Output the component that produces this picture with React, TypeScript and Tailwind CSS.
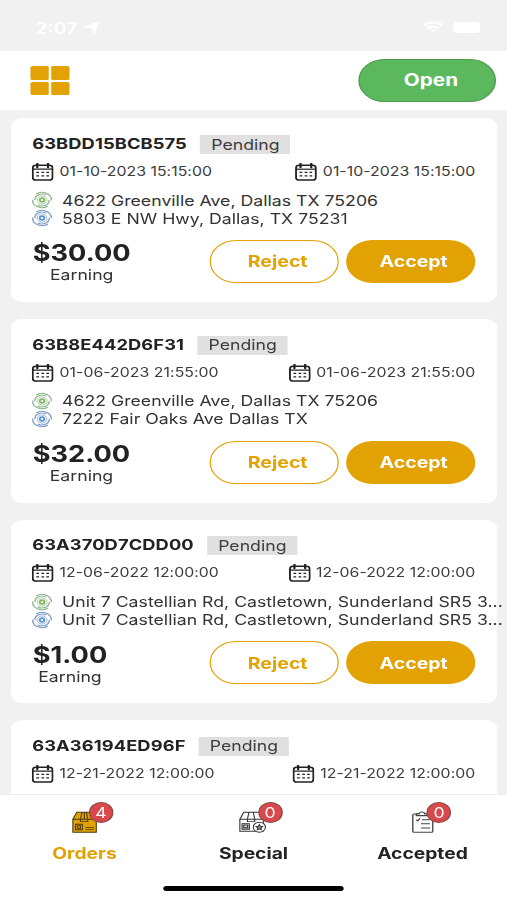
import clsx from "clsx";

type Order = {
  id: string;
  pickup: string;
  dropoff: string;
  from: string;
  to: string;
  earning: string;
};

const ORDERS: Order[] = [
  {
    id: "63BDD15BCB575",
    pickup: "01-10-2023 15:15:00",
    dropoff: "01-10-2023 15:15:00",
    from: "4622 Greenville Ave, Dallas TX 75206",
    to: "5803 E NW Hwy, Dallas, TX 75231",
    earning: "$30.00",
  },
  {
    id: "63B8E442D6F31",
    pickup: "01-06-2023 21:55:00",
    dropoff: "01-06-2023 21:55:00",
    from: "4622 Greenville Ave, Dallas TX 75206",
    to: "7222 Fair Oaks Ave Dallas TX",
    earning: "$32.00",
  },
  {
    id: "63A370D7CDD00",
    pickup: "12-06-2022 12:00:00",
    dropoff: "12-06-2022 12:00:00",
    from: "Unit 7 Castellian Rd, Castletown, Sunderland SR5 3...",
    to: "Unit 7 Castellian Rd, Castletown, Sunderland SR5 3...",
    earning: "$1.00",
  },
];

// Only the top of this card shows above the tab bar
const NEXT_ORDER = {
  id: "63A36194ED96F",
  pickup: "12-21-2022 12:00:00",
  dropoff: "12-21-2022 12:00:00",
};

const TABS = [
  { label: "Orders", count: 4, active: true, Icon: BoxIcon },
  { label: "Special", count: 0, active: false, Icon: SpecialBoxIcon },
  { label: "Accepted", count: 0, active: false, Icon: ClipboardIcon },
];

function CalendarIcon() {
  return (
    <svg viewBox="0 0 18 18" className="h-[18px] w-[18px] shrink-0" fill="none" stroke="#222">
      <rect x="0.9" y="2.2" width="16.2" height="14.9" rx="2.6" strokeWidth="1.5" />
      <path d="M1 6.2h16" strokeWidth="1.2" />
      <path d="M4.6 0.8v3.4M13.4 0.8v3.4" strokeWidth="1.9" strokeLinecap="round" />
      <path d="M3.8 9.4h2.2M8 9.4h2.2M12 9.4h2.2M3.8 12.9h2.2M8 12.9h2.2M12 12.9h2.2" strokeWidth="1.4" />
    </svg>
  );
}

function TargetIcon({ ring, core }: { ring: string; core: string }) {
  return (
    <svg viewBox="0 0 18 18" className="h-[18px] w-[17px] shrink-0" fill="none" stroke={ring}>
      <path d="M4 2.6A8.1 8.1 0 0 1 17.1 9.4M14 15.4A8.1 8.1 0 0 1 0.9 8.6" strokeWidth="1.2" />
      <path d="M2.7 9A6.3 6.3 0 0 1 12.6 3.8M15.3 9A6.3 6.3 0 0 1 5.4 14.2" strokeWidth="1.2" />
      <circle cx="9" cy="9" r="4.3" strokeWidth="0.7" />
      <circle cx="9" cy="9" r="2" stroke={core} strokeWidth="1.7" />
    </svg>
  );
}

function BoxIcon() {
  return (
    <svg viewBox="0 0 21 22" className="h-[22px] w-[21px]" fill="#e3a203" stroke="#4a3a10" strokeWidth="0.9">
      <path d="M0.8 8.2 4 1.2h13l3 7v13H0.8z" />
      <path d="M0.8 8.2H20M8.3 1.2 7 8.2v2.4h6V8.2l-1.2-7M10.2 1.2v7" fill="none" />
      <path d="M3 13.2h5.6v5.6H3zM4.6 14.8h2.4v2.4H4.6z" fill="none" />
      <path d="M11 16.4h7M11 18.4h7" />
    </svg>
  );
}

function SpecialBoxIcon() {
  return (
    <svg viewBox="0 0 23 22" className="h-[22px] w-[23px]" fill="#fff" stroke="#333" strokeWidth="0.9">
      <path d="M0.8 8.2 4 1.2h13l3 7v12H0.8z" />
      <path d="M0.8 8.2H20M8.3 1.2 7 8.2v2.4h6V8.2l-1.2-7" fill="none" />
      <path d="M2.6 12.6h6v5.6h-6zM4 14h3.2v2.8H4z" fill="#ddd" />
      <circle cx="16.8" cy="16.2" r="5" />
      <path d="m16.8 13.6.8 1.7 1.9.2-1.4 1.3.4 1.9-1.7-.9-1.7.9.4-1.9-1.4-1.3 1.9-.2z" fill="#999" />
    </svg>
  );
}

function ClipboardIcon() {
  return (
    <svg viewBox="0 0 18 22" className="h-[22px] w-[18px]" fill="none" stroke="#444" strokeWidth="1.1">
      <rect x="0.7" y="3" width="16.4" height="18.2" rx="1" />
      <path d="M3.6 4.6V2.9h2.2C6.4.4 10 .4 10.6 2.9h2.6v1.7z" fill="#fff" />
      <path d="m3.6 8.6 1.1 1.2 2-2.4M8.2 8.7h6.6M7.4 12.8h7.4M7.4 17h7.4" />
    </svg>
  );
}

function StatusBar() {
  return (
    <div className="flex h-[51px] shrink-0 items-center justify-between pr-[22px] pl-[29px] text-white">
      <div className="flex items-center gap-[5px] pt-[4px]">
        <span className="text-[16px] font-semibold">2:07</span>
        <svg viewBox="0 0 13 13" className="h-[13px] w-[13px]" fill="currentColor">
          <path d="M12.6.4 8 12.6 6.6 7 .4 6z" stroke="currentColor" strokeWidth="0.8" strokeLinejoin="round" />
        </svg>
      </div>
      <div className="flex items-center gap-[8px] pt-[3px]">
        <svg viewBox="0 0 17 12" className="h-[12px] w-[17px]" fill="none" stroke="currentColor" strokeWidth="2.2">
          <path d="M1 4.4a11 11 0 0 1 15 0M3.8 7.4a7 7 0 0 1 9.4 0" />
          <path d="m6.2 9.6 2.3 2.2 2.3-2.2a3.4 3.4 0 0 0-4.6 0z" fill="currentColor" stroke="none" />
        </svg>
        <div className="h-[11px] w-[22px] rounded-[3px] bg-white" />
      </div>
    </div>
  );
}

function Header() {
  return (
    <header className="flex h-[59px] shrink-0 items-center justify-between bg-white pr-[8.6px] pl-[25px]">
      <div className="grid grid-cols-2 gap-[2px]">
        {[0, 1, 2, 3].map((i) => (
          <div key={i} className="h-[13.3px] w-[15.1px] rounded-[1.5px] bg-[#e3a203]" />
        ))}
      </div>
      <button className="h-[43.5px] w-[113.6px] rounded-full border border-[#4d9a4d] bg-[#5cb85c] pt-[1px] pl-[6px] text-[17px] font-bold text-white">
        Open
      </button>
    </header>
  );
}

function DateStamp({ value }: { value: string }) {
  return (
    <div className="flex items-center gap-[4.5px]">
      <CalendarIcon />
      <span className="text-[13px] tracking-[0.03px] text-[#3c3c3c]">{value}</span>
    </div>
  );
}

function Address({ value, ring, core }: { value: string; ring: string; core: string }) {
  return (
    <div className="flex h-[18px] items-center gap-[7.5px]">
      <TargetIcon ring={ring} core={core} />
      <span className="text-[14.5px] tracking-[0.01px] whitespace-nowrap text-[#333]">{value}</span>
    </div>
  );
}

function OrderSummary({ id, pickup, dropoff }: Pick<Order, "id" | "pickup" | "dropoff">) {
  return (
    <>
      <div className="flex h-[19px] items-center gap-[11px]">
        <span className="text-[15px] font-bold tracking-[0.09px] text-[#222]">{id}</span>
        <span className="flex h-[19px] w-[74px] items-center justify-center bg-[#e0e0e0] text-[14.5px] text-[#3c3c3c]">
          Pending
        </span>
      </div>
      <div className="mt-[9px] flex h-[18px] items-center justify-between">
        <DateStamp value={pickup} />
        <DateStamp value={dropoff} />
      </div>
    </>
  );
}

function OrderCard({ order }: { order: Order }) {
  return (
    <article className="h-[183.6px] shrink-0 rounded-[9px] bg-white pt-[16.6px] pr-[17.5px] pl-[17px]">
      <OrderSummary id={order.id} pickup={order.pickup} dropoff={order.dropoff} />
      <div className="mt-[10.5px]">
        <Address value={order.from} ring="#8fb58f" core="#7cba5a" />
        <Address value={order.to} ring="#7f9cc4" core="#5a94d6" />
      </div>
      <div className="mt-[12.5px] flex justify-between">
        <div className="-mt-[0.6px] flex flex-col items-center pl-[0.5px]">
          <span className="text-[22.3px] leading-[27px] font-bold text-[#222]">{order.earning}</span>
          <span className="text-[14.5px] leading-[18px] text-[#333]">Earning</span>
        </div>
        <div className="flex gap-[5.4px]">
          <button className="h-[43px] w-[106.2px] rounded-full border border-[#e3a203] pl-[5px] text-[16px] font-bold text-[#e3a203]">
            Reject
          </button>
          <button className="h-[43px] w-[106.2px] rounded-full bg-[#e3a203] pl-[5px] text-[16px] font-bold text-white">
            Accept
          </button>
        </div>
      </div>
    </article>
  );
}

function TabBar() {
  return (
    <nav className="flex h-[106px] shrink-0 flex-col border-t border-[#ededed] bg-white">
      <div className="grid grid-cols-3">
        {TABS.map(({ label, count, active, Icon }) => (
          <div key={label} className="flex flex-col items-center pt-[15.5px]">
            <div className="relative">
              <Icon />
              <span className="absolute -top-[8.5px] left-1/2 ml-[3.6px] flex h-[21px] w-[20px] items-center justify-center rounded-full border border-[#8a4a4a] bg-[#d9484a] pt-[1px] text-[14.5px] leading-none text-white">
                {count}
              </span>
            </div>
            <span
              className={clsx(
                "mt-[10.5px] text-[15.8px] leading-[22px] font-bold",
                active ? "text-[#e3a203]" : "text-[#222]",
              )}
            >
              {label}
            </span>
          </div>
        ))}
      </div>
      <div className="mx-auto mt-[21px] h-[5px] w-[148px] rounded-full bg-black" />
    </nav>
  );
}

export default function App() {
  return (
    <div className="h-[900px] w-[507px] overflow-hidden bg-[#f1f1f1]">
      {/* 416px wide screen, widened to fill the frame */}
      <div className="flex h-full w-[416px] origin-top-left scale-x-[1.21875] flex-col font-['Inter',sans-serif]">
        <StatusBar />
        <Header />
        <main className="flex min-h-0 flex-1 flex-col gap-[17px] pt-[8.4px] pr-[8.5px] pl-[9.4px]">
          {ORDERS.map((order) => (
            <OrderCard key={order.id} order={order} />
          ))}
          <article className="min-h-0 flex-1 rounded-t-[9px] bg-white pt-[16.6px] pr-[17.5px] pl-[17px]">
            <OrderSummary {...NEXT_ORDER} />
          </article>
        </main>
        <TabBar />
      </div>
    </div>
  );
}
